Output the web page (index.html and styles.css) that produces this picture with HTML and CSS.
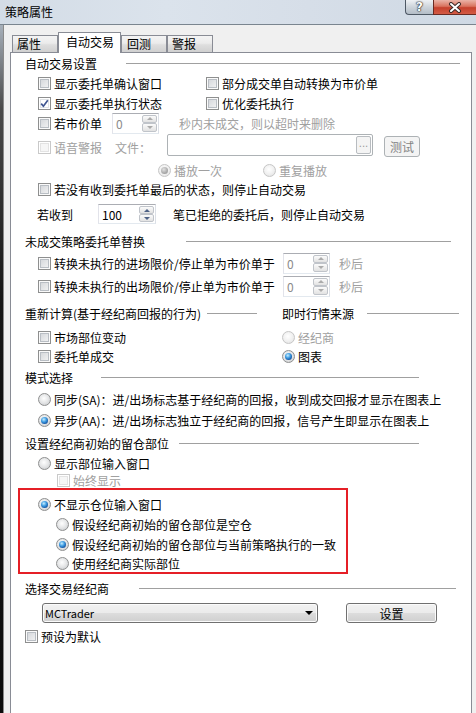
FILE: index.html
```html
<!DOCTYPE html>
<html lang="zh-CN">
<head>
  <meta charset="UTF-8">
  <title>策略属性</title>
  <link rel="stylesheet" href="styles.css">
</head>
<body>
<div class="window">
  <div class="titlebar">
    <span class="title">策略属性</span>
    <div class="caption">
      <span class="cap-help">?</span>
      <span class="cap-close">
        <svg width="14" height="11" viewBox="0 0 14 11">
          <path d="M3 2 L11 9 M11 2 L3 9" stroke="#3b2a28" stroke-width="4" stroke-linecap="round"/>
          <path d="M3 2 L11 9 M11 2 L3 9" stroke="#fff" stroke-width="2" stroke-linecap="round"/>
        </svg>
      </span>
    </div>
  </div>

  <div class="frame">
    <div class="edge"></div>
    <div class="dialog">
      <div class="tabs">
        <span class="tab t1">属性</span>
        <span class="tab t2 on">自动交易</span>
        <span class="tab t3">回测</span>
        <span class="tab t4">警报</span>
      </div>

      <div class="panel">
        <!-- 自动交易设置 -->
        <div class="hdr h20"><span>自动交易设置</span><i class="rule rule-auto"></i></div>
        <div class="row h20">
          <label class="opt col-a"><span class="cb"></span>显示委托单确认窗口</label>
          <label class="opt"><span class="cb"></span>部分成交单自动转换为市价单</label>
        </div>
        <div class="row h20">
          <label class="opt col-a"><span class="cb on"><svg width="9" height="9" viewBox="0 0 9 9"><path d="M1.2 4.6 L3.4 7.2 L7.8 1.2" fill="none" stroke="#3f5590" stroke-width="1.7"/></svg></span>显示委托单执行状态</label>
          <label class="opt"><span class="cb"></span>优化委托执行</label>
        </div>
        <div class="row h20">
          <label class="opt"><span class="cb"></span>若市价单</label>
          <div class="spin dis ml10"><span class="spin-val">0</span><span class="spin-btns"><span class="up"></span><span class="down"></span></span></div>
          <span class="dim ml20">秒内未成交，则以超时来删除</span>
        </div>
        <div class="row h28">
          <label class="opt dim"><span class="cb dis"></span>语音警报</label>
          <span class="dim ml13">文件：</span>
          <div class="file ml16"><span class="dots">...</span></div>
          <span class="btn dis test ml11">测试</span>
        </div>
        <div class="row h18">
          <label class="opt dim ml120"><span class="rb dis on"></span>播放一次</label>
          <label class="opt dim ml41"><span class="rb dis"></span>重复播放</label>
        </div>
        <div class="row h20">
          <label class="opt"><span class="cb"></span>若没有收到委托单最后的状态，则停止自动交易</label>
        </div>
        <div class="row h30 pl26">
          <span>若收到</span>
          <div class="spin wide ml25"><span class="spin-val">100</span><span class="spin-btns"><span class="up"></span><span class="down"></span></span></div>
          <span class="ml17">笔已拒绝的委托后，则停止自动交易</span>
        </div>

        <!-- 未成交策略委托单替换 -->
        <div class="hdr h24"><span>未成交策略委托单替换</span><i class="rule rule-replace"></i></div>
        <div class="row h20">
          <label class="opt lbl-wide"><span class="cb"></span>转换未执行的进场限价/停止单为市价单于</label>
          <div class="spin dis"><span class="spin-val">0</span><span class="spin-btns"><span class="up"></span><span class="down"></span></span></div>
          <span class="dim ml9">秒后</span>
        </div>
        <div class="row h26">
          <label class="opt lbl-wide"><span class="cb"></span>转换未执行的出场限价/停止单为市价单于</label>
          <div class="spin dis"><span class="spin-val">0</span><span class="spin-btns"><span class="up"></span><span class="down"></span></span></div>
          <span class="dim ml9">秒后</span>
        </div>

        <!-- 重新计算 / 即时行情来源 -->
        <div class="split">
          <div class="col-l">
            <div class="hdr h29"><span>重新计算(基于经纪商回报的行为)</span><i class="rule rule-recalc"></i></div>
            <div class="row h19"><label class="opt"><span class="cb"></span>市场部位变动</label></div>
            <div class="row h18"><label class="opt"><span class="cb"></span>委托单成交</label></div>
          </div>
          <div class="col-r">
            <div class="hdr flat h29"><span>即时行情来源</span><i class="rule rule-feed"></i></div>
            <div class="row flat h19"><label class="opt dim"><span class="rb dis"></span>经纪商</label></div>
            <div class="row flat h18"><label class="opt"><span class="rb on"></span>图表</label></div>
          </div>
        </div>

        <!-- 模式选择 -->
        <div class="hdr h24"><span>模式选择</span><i class="rule rule-mode"></i></div>
        <div class="row h20"><label class="opt"><span class="rb"></span>同步(SA)：进/出场标志基于经纪商的回报，收到成交回报才显示在图表上</label></div>
        <div class="row h22"><label class="opt"><span class="rb on"></span>异步(AA)：进/出场标志独立于经纪商的回报，信号产生即显示在图表上</label></div>

        <!-- 留仓部位 -->
        <div class="hdr h24"><span>设置经纪商初始的留仓部位</span><i class="rule rule-pos"></i></div>
        <div class="row h17"><label class="opt"><span class="rb"></span>显示部位输入窗口</label></div>
        <div class="row h16 pl46"><label class="opt dim"><span class="cb dis"></span>始终显示</label></div>

        <div class="box">
          <div class="row h20 pl18"><label class="opt"><span class="rb on"></span>不显示仓位输入窗口</label></div>
          <div class="row h21 pl36"><label class="opt"><span class="rb"></span>假设经纪商初始的留仓部位是空仓</label></div>
          <div class="row h19 pl36"><label class="opt"><span class="rb on"></span>假设经纪商初始的留仓部位与当前策略执行的一致</label></div>
          <div class="row h18 pl36"><label class="opt"><span class="rb"></span>使用经纪商实际部位</label></div>
        </div>

        <!-- 选择交易经纪商 -->
        <div class="hdr h28"><span>选择交易经纪商</span><i class="rule rule-broker"></i></div>
        <div class="row h22 pl31">
          <div class="combo"><span class="en">MCTrader</span><i class="arrow"></i></div>
          <span class="btn setup">设置</span>
        </div>
        <div class="row h24 pl14"><label class="opt"><span class="cb"></span>预设为默认</label></div>
      </div>
    </div>
  </div>
</div>
</body>
</html>
```

FILE: styles.css
```css
* {
  box-sizing: border-box;
}
body {
  margin: 0;
  background: #f0f0f0;
  font-family: "Noto Sans CJK SC", sans-serif;
  font-size: 12px;
  color: #000;
  overflow: hidden;
}
.window {
  height: 720px;
  display: flex;
  flex-direction: column;
}

/* title bar */
.titlebar {
  height: 25px;
  flex: none;
  display: flex;
  align-items: flex-start;
  background: linear-gradient(to right, #d3dce6, #dbe3ec 35%, #d6dee8 65%, #cfd9e4);
  border-bottom: 1px solid #7a858f;
}
.title {
  padding-left: 5px;
  line-height: 24px;
}
.caption {
  margin-left: auto;
  display: flex;
}
.cap-help {
  width: 28px;
  height: 15px;
  border: 1px solid #4d5864;
  border-top: none;
  border-right: none;
  border-radius: 0 0 0 4px;
  background: linear-gradient(#eef1f4, #cdd4db 50%, #b3bdc7);
  display: flex;
  align-items: center;
  justify-content: center;
  font-family: "DejaVu Sans", sans-serif;
  font-weight: bold;
  font-size: 12px;
  color: #fff;
  text-shadow: 0 0 1px #222, 0 0 1px #222, 0 0 2px #333;
}
.cap-close {
  width: 43px;
  height: 15px;
  border-left: 1px solid #6a2a22;
  border-bottom: 1px solid #6a2a22;
  background: linear-gradient(#eab3a7, #d9735f 45%, #c5402c 55%, #d35b45);
  display: flex;
  align-items: center;
  justify-content: center;
}

/* window body */
.frame {
  flex: 1;
  display: flex;
}
.edge {
  width: 4px;
  flex: none;
  background: linear-gradient(#a7b0ba, #4a4a4a 12%, #161616 40%, #0c0c0c);
  border-right: 1px solid #8a8a8a;
}
.dialog {
  flex: 1;
  display: flex;
  flex-direction: column;
  padding: 7px 4px 0 6px;
}

/* tabs */
.tabs {
  display: flex;
  align-items: flex-end;
  height: 20px;
  padding-left: 2px;
}
.tab {
  height: 17px;
  border: 1px solid #898c95;
  border-bottom: none;
  background: linear-gradient(#f4f4f4, #ebebeb 45%, #dedede 55%, #d0d0d0);
  line-height: 16px;
  padding-left: 4px;
}
.tab.on {
  height: 21px;
  margin-bottom: -1px;
  background: #fff;
  position: relative;
  z-index: 1;
  padding-left: 7px;
  line-height: 18px;
}
.t1 { width: 46px; }
.t2 { width: 63px; }
.t3 { width: 46px; padding-left: 5px; }
.t4 { width: 46px; }

.panel {
  flex: 1;
  background: #fff;
  border: 1px solid #898c95;
}

/* rows and section headers */
.hdr {
  display: flex;
  align-items: center;
  padding-left: 14px;
  white-space: nowrap;
}
.rule {
  height: 1px;
  background: #a0a0a0;
  margin-left: auto;
}
.rule-auto { width: 334px; margin-right: 11px; }
.rule-replace { width: 265px; margin-right: 20px; }
.rule-recalc { width: 50px; margin-right: 25px; }
.rule-feed { width: 92px; margin-right: 12px; }
.rule-mode { width: 318px; margin-right: 52px; }
.rule-pos { width: 240px; margin-right: 52px; }
.rule-broker { width: 317px; margin-right: 15px; }

.row {
  display: flex;
  align-items: center;
  padding-left: 27px;
  white-space: nowrap;
}
.flat { padding-left: 0; }
.pl14 { padding-left: 14px; }
.pl18 { padding-left: 18px; }
.pl26 { padding-left: 26px; }
.pl31 { padding-left: 31px; }
.pl36 { padding-left: 36px; }
.pl46 { padding-left: 46px; }

.h16 { height: 16px; }
.h17 { height: 17px; }
.h18 { height: 18px; }
.h19 { height: 19px; }
.h20 { height: 20px; }
.h21 { height: 21px; }
.h22 { height: 22px; }
.h24 { height: 24px; }
.h26 { height: 26px; }
.h28 { height: 28px; }
.h29 { height: 29px; }
.h30 { height: 30px; }

.ml9 { margin-left: 9px; }
.ml10 { margin-left: 10px; }
.ml11 { margin-left: 11px; }
.ml13 { margin-left: 13px; }
.ml16 { margin-left: 16px; }
.ml17 { margin-left: 17px; }
.ml20 { margin-left: 20px; }
.ml25 { margin-left: 25px; }
.ml41 { margin-left: 41px; }
.ml120 { margin-left: 120px; }

.split {
  display: flex;
}
.col-l { width: 271px; }
.col-r { flex: 1; }

.opt {
  display: flex;
  align-items: center;
  gap: 3px;
}
.col-a { width: 168px; }
.lbl-wide { width: 245px; }
.dim { color: #a0a0a0; }
.en { font-size: 11px; }

/* checkbox */
.cb {
  width: 13px;
  height: 13px;
  flex: none;
  border: 1px solid #8e8f8f;
  background: linear-gradient(135deg, #cfd2d6, #f7f7f7);
  box-shadow: inset 0 0 0 1px #fafafa, inset 0 0 0 2px #b9bec4;
  display: flex;
  align-items: center;
  justify-content: center;
}
.cb.on {
  background: #fff;
  box-shadow: inset 0 0 0 1px #fff, inset 0 0 0 2px #dfe2e5;
}
.cb.dis {
  border-color: #c9c9c9;
  background: #f6f6f6;
  box-shadow: inset 0 0 0 1px #fff, inset 0 0 0 2px #e3e3e3;
}

/* radio */
.rb {
  width: 13px;
  height: 13px;
  flex: none;
  border-radius: 50%;
  border: 1px solid #8e8f8f;
  background: radial-gradient(circle at 45% 40%, #fefefe 0, #e7e8e9 45%, #c3c5c8 100%);
  display: flex;
  align-items: center;
  justify-content: center;
}
.rb.on::after {
  content: "";
  width: 7px;
  height: 7px;
  border-radius: 50%;
  background: radial-gradient(circle at 40% 35%, #c8eeff 0, #3f9de2 40%, #0f4c9c 78%, #0a2d68 100%);
}
.rb.dis {
  border-color: #c6c6c6;
  background: radial-gradient(circle at 45% 40%, #fff 0, #f1f1f1 50%, #dedede 100%);
}
.rb.dis.on::after {
  background: radial-gradient(circle at 40% 35%, #e2e2e2 0, #a9a9a9 60%, #8e8e8e 100%);
}

/* spin box */
.spin {
  display: flex;
  width: 47px;
  height: 21px;
  border: 1px solid #abadb3;
  border-color: #abadb3 #dbdfe6 #e3e9ef #e2e3ea;
  background: #fff;
  padding: 1px;
}
.spin.wide { width: 58px; height: 20px; }
.spin-val {
  flex: 1;
  padding-left: 2px;
  line-height: 17px;
}
.spin.dis .spin-val { color: #8a8a8a; }
.spin-btns {
  width: 15px;
  display: flex;
  flex-direction: column;
}
.spin-btns span {
  flex: 1;
  border: 1px solid #c0c4ca;
  border-radius: 2px;
  background: linear-gradient(#fbfbfb, #e2e2e2);
  display: flex;
  align-items: center;
  justify-content: center;
}
.spin-btns .up::after {
  content: "";
  border-left: 3px solid transparent;
  border-right: 3px solid transparent;
  border-bottom: 3px solid #4d6185;
}
.spin-btns .down::after {
  content: "";
  border-left: 3px solid transparent;
  border-right: 3px solid transparent;
  border-top: 3px solid #4d6185;
}
.spin.dis .up::after { border-bottom-color: #ababab; }
.spin.dis .down::after { border-top-color: #ababab; }

/* file field */
.file {
  width: 206px;
  height: 22px;
  margin-bottom: 4px;
  border: 1px solid #adb2b5;
  border-radius: 2px;
  background: #fff;
  display: flex;
  justify-content: flex-end;
  align-items: center;
  padding-right: 1px;
}
.dots {
  width: 15px;
  height: 18px;
  border: 1px solid #b8bcc0;
  border-radius: 2px;
  background: #f4f4f4;
  color: #9a9a9a;
  font-size: 10px;
  line-height: 14px;
  text-align: center;
  font-family: "DejaVu Sans", sans-serif;
}

/* buttons */
.btn {
  height: 20px;
  border: 1px solid #707070;
  border-radius: 3px;
  background: linear-gradient(#f2f2f2, #ebebeb 50%, #dddddd 51%, #cfcfcf);
  box-shadow: inset 0 0 0 1px #fbfbfb;
  display: flex;
  align-items: center;
  justify-content: center;
}
.btn.dis {
  border-color: #adb2b5;
  background: #f4f4f4;
  box-shadow: none;
  color: #838383;
}
.test {
  width: 36px;
  height: 21px;
  margin-bottom: 2px;
}
.setup {
  width: 91px;
  margin-left: 28px;
}

/* combo */
.combo {
  width: 276px;
  height: 20px;
  border: 1px solid #707070;
  border-radius: 3px;
  background: linear-gradient(#f2f2f2, #ebebeb 50%, #dddddd 51%, #cfcfcf);
  box-shadow: inset 0 0 0 1px #fbfbfb;
  display: flex;
  align-items: center;
  padding: 0 4px 0 2px;
}
.arrow {
  margin-left: auto;
  border-left: 4px solid transparent;
  border-right: 4px solid transparent;
  border-top: 4px solid #000;
}

/* highlight box */
.box {
  margin-left: 7px;
  width: 330px;
  height: 86px;
  border: 2px solid #e51f26;
  padding-top: 4px;
}
```
